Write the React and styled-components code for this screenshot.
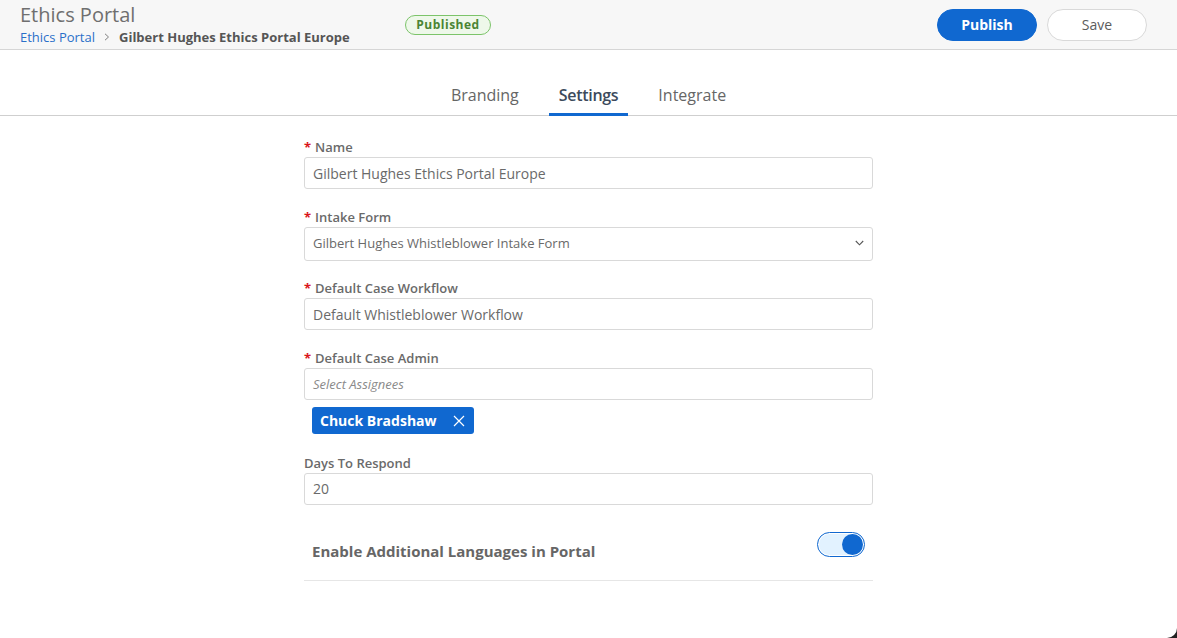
import React from "react";
import styled, { createGlobalStyle } from "styled-components";

const Global = createGlobalStyle`
  html, body { margin: 0; padding: 0; background: #fff; overflow: hidden; }
  body { font-family: "Open Sans", "Liberation Sans", sans-serif; color: #555; }
  * { box-sizing: border-box; }
`;
const Page = styled.div`
  position: relative;
  width: 1177px;
  height: 638px;
  overflow: hidden;
  background: #fff;
`;
const Header = styled.header`
  height: 50px;
  background: #f7f7f7;
  border-bottom: 1px solid #d6d6d6;
  display: flex;
  align-items: flex-start;
  padding: 0 30px 0 20px;
`;
const TitleBlock = styled.div`
  width: 385px;
  display: flex;
  flex-direction: column;
`;
const Title = styled.div`
  font-size: 20px;
  line-height: 24px;
  margin-top: 3px;
  color: #6f6f6f;
`;
const Crumbs = styled.div`
  display: flex;
  align-items: center;
  font-size: 13px;
  line-height: 18px;
  margin-top: 1px;
`;
const CrumbLink = styled.a`
  color: #2a6fc9;
`;
const CrumbSep = styled.span`
  display: flex;
  margin: 0 9px;
  color: #777;
`;
const CrumbCurrent = styled.span`
  font-weight: 700;
  color: #555;
`;
const Badge = styled.span`
  margin-top: 15px;
  height: 20px;
  width: 86px;
  display: flex;
  align-items: center;
  justify-content: center;
  padding-bottom: 1px;
  border: 1px solid #7cc46a;
  border-radius: 10px;
  background: #eef8ea;
  color: #4a8433;
  font-size: 12px;
  font-weight: 700;
  letter-spacing: 0.5px;
`;
const Actions = styled.div`
  margin-left: auto;
  margin-top: 9px;
  display: flex;
  gap: 10px;
`;
const Button = styled.button`
  width: 100px;
  height: 32px;
  border-radius: 16px;
  font-family: inherit;
  font-size: 14px;
  padding: 0 0 2px;
  font-weight: ${p => (p.$primary ? 700 : 400)};
  color: ${p => (p.$primary ? "#fff" : "#5c5c5c")};
  background: ${p => (p.$primary ? "#1068d0" : "#fff")};
  border: 1px solid ${p => (p.$primary ? "#1068d0" : "#d9d9d9")};
`;
const Tabs = styled.nav`
  height: 66px;
  border-bottom: 1px solid #cfcfcf;
  display: flex;
  justify-content: center;
  align-items: flex-end;
`;
const Tab = styled.div`
  height: 39px;
  margin-bottom: -1px;
  padding: 7px 10px 0;
  margin-right: ${p => (p.$last ? 0 : "20px")};
  font-size: 16px;
  line-height: 22px;
  color: ${p => (p.$active ? "#3c4a5c" : "#666")};
  font-weight: ${p => (p.$active ? 600 : 400)};
  letter-spacing: ${p => (p.$active ? "-0.3px" : "0")};
  border-bottom: 3px solid ${p => (p.$active ? "#1068d0" : "transparent")};
`;
const Form = styled.div`
  width: 569px;
  margin: 0 0 0 304px;
  padding-top: 22px;
  display: flex;
  flex-direction: column;
`;
const Field = styled.div`
  display: flex;
  flex-direction: column;
  margin-bottom: ${p => p.$gap ?? 18}px;
`;
const Label = styled.label`
  font-size: 13px;
  font-weight: 600;
  line-height: 18px;
  height: 19px;
  color: #6a6a6a;
`;
const Star = styled.span`
  color: #d9161c;
  font-weight: 700;
  margin-right: 4px;
`;
const Input = styled.div`
  height: ${p => p.$h ?? 32}px;
  border: 1px solid #d9d9d9;
  border-radius: 3px;
  background: #fff;
  display: flex;
  align-items: center;
  justify-content: space-between;
  padding: 0 8px ${p => p.$lift ?? 0}px;
  font-size: ${p => (p.$small ? "13px" : "14px")};
  font-style: ${p => (p.$placeholder ? "italic" : "normal")};
  color: ${p => (p.$placeholder ? "#8a8a8a" : "#6a6a6a")};
`;
const Tag = styled.div`
  align-self: flex-start;
  margin: 7px 0 0 8px;
  height: 27px;
  width: 162px;
  border-radius: 3px;
  background: #1068d0;
  color: #fff;
  font-size: 14px;
  font-weight: 700;
  display: flex;
  align-items: center;
  justify-content: space-between;
  padding: 0 9px 0 8px;
`;
const ToggleRow = styled.div`
  height: 67px;
  margin-top: 9px;
  border-bottom: 1px solid #e6e6e6;
  display: flex;
  align-items: flex-start;
  justify-content: space-between;
  padding: 0 8px;
`;
const ToggleLabel = styled.div`
  margin-top: 27px;
  font-size: 15px;
  line-height: 20px;
  font-weight: 700;
  color: #666;
`;
const Toggle = styled.div`
  margin-top: 18px;
  width: 48px;
  height: 25px;
  border-radius: 13px;
  border: 1px solid #1068d0;
  background: #e2f2ff;
  display: flex;
  align-items: center;
  justify-content: flex-end;
  padding-right: 1px;
  box-shadow: inset 0 0 0 1px #fff;
`;
const Knob = styled.span`
  width: 21px;
  height: 21px;
  border-radius: 50%;
  background: #1068d0;
`;
const Corner = styled.svg`
  position: absolute;
  right: 0;
  bottom: 0;
  display: block;
`;

const Req = () => <Star>*</Star>;

export default function App() {
  return (
    <Page>
      <Global />
      <Header>
        <TitleBlock>
          <Title>Ethics Portal</Title>
          <Crumbs>
            <CrumbLink>Ethics Portal</CrumbLink>
            <CrumbSep>
              <svg width="6" height="8" viewBox="0 0 6 8" fill="none" stroke="#808080" strokeWidth="1">
                <path d="M1 .8 4.5 4 1 7.2" />
              </svg>
            </CrumbSep>
            <CrumbCurrent>Gilbert Hughes Ethics Portal Europe</CrumbCurrent>
          </Crumbs>
        </TitleBlock>
        <Badge>Published</Badge>
        <Actions>
          <Button $primary>Publish</Button>
          <Button>Save</Button>
        </Actions>
      </Header>
      <Tabs>
        <Tab>Branding</Tab>
        <Tab $active>Settings</Tab>
        <Tab $last>Integrate</Tab>
      </Tabs>
      <Form>
        <Field $gap={19}>
          <Label><Req />Name</Label>
          <Input>Gilbert Hughes Ethics Portal Europe</Input>
        </Field>
        <Field $gap={18}>
          <Label><Req />Intake Form</Label>
          <Input $h={34} $small $lift={2}>
            Gilbert Hughes Whistleblower Intake Form
            <svg width="9" height="6" viewBox="0 0 9 6" fill="none" stroke="#555" strokeWidth="1.1">
              <path d="M.8 1l3.7 3.8L8.2 1" />
            </svg>
          </Input>
        </Field>
        <Field $gap={19}>
          <Label><Req />Default Case Workflow</Label>
          <Input>Default Whistleblower Workflow</Input>
        </Field>
        <Field $gap={20}>
          <Label><Req />Default Case Admin</Label>
          <Input $placeholder $small>Select Assignees</Input>
          <Tag>
            Chuck Bradshaw
            <svg width="12" height="12" viewBox="0 0 12 12" fill="none" stroke="#fff" strokeWidth="1.2">
              <path d="M1 1l10 10M11 1 1 11" />
            </svg>
          </Tag>
        </Field>
        <Field $gap={0}>
          <Label>Days To Respond</Label>
          <Input $lift={1}>20</Input>
        </Field>
        <ToggleRow>
          <ToggleLabel>Enable Additional Languages in Portal</ToggleLabel>
          <Toggle><Knob /></Toggle>
        </ToggleRow>
      </Form>
      <Corner width="10" height="10" viewBox="0 0 10 10">
        <path d="M10 0v10H0a10 10 0 0 0 10-10z" fill="#222" />
      </Corner>
    </Page>
  );
}
